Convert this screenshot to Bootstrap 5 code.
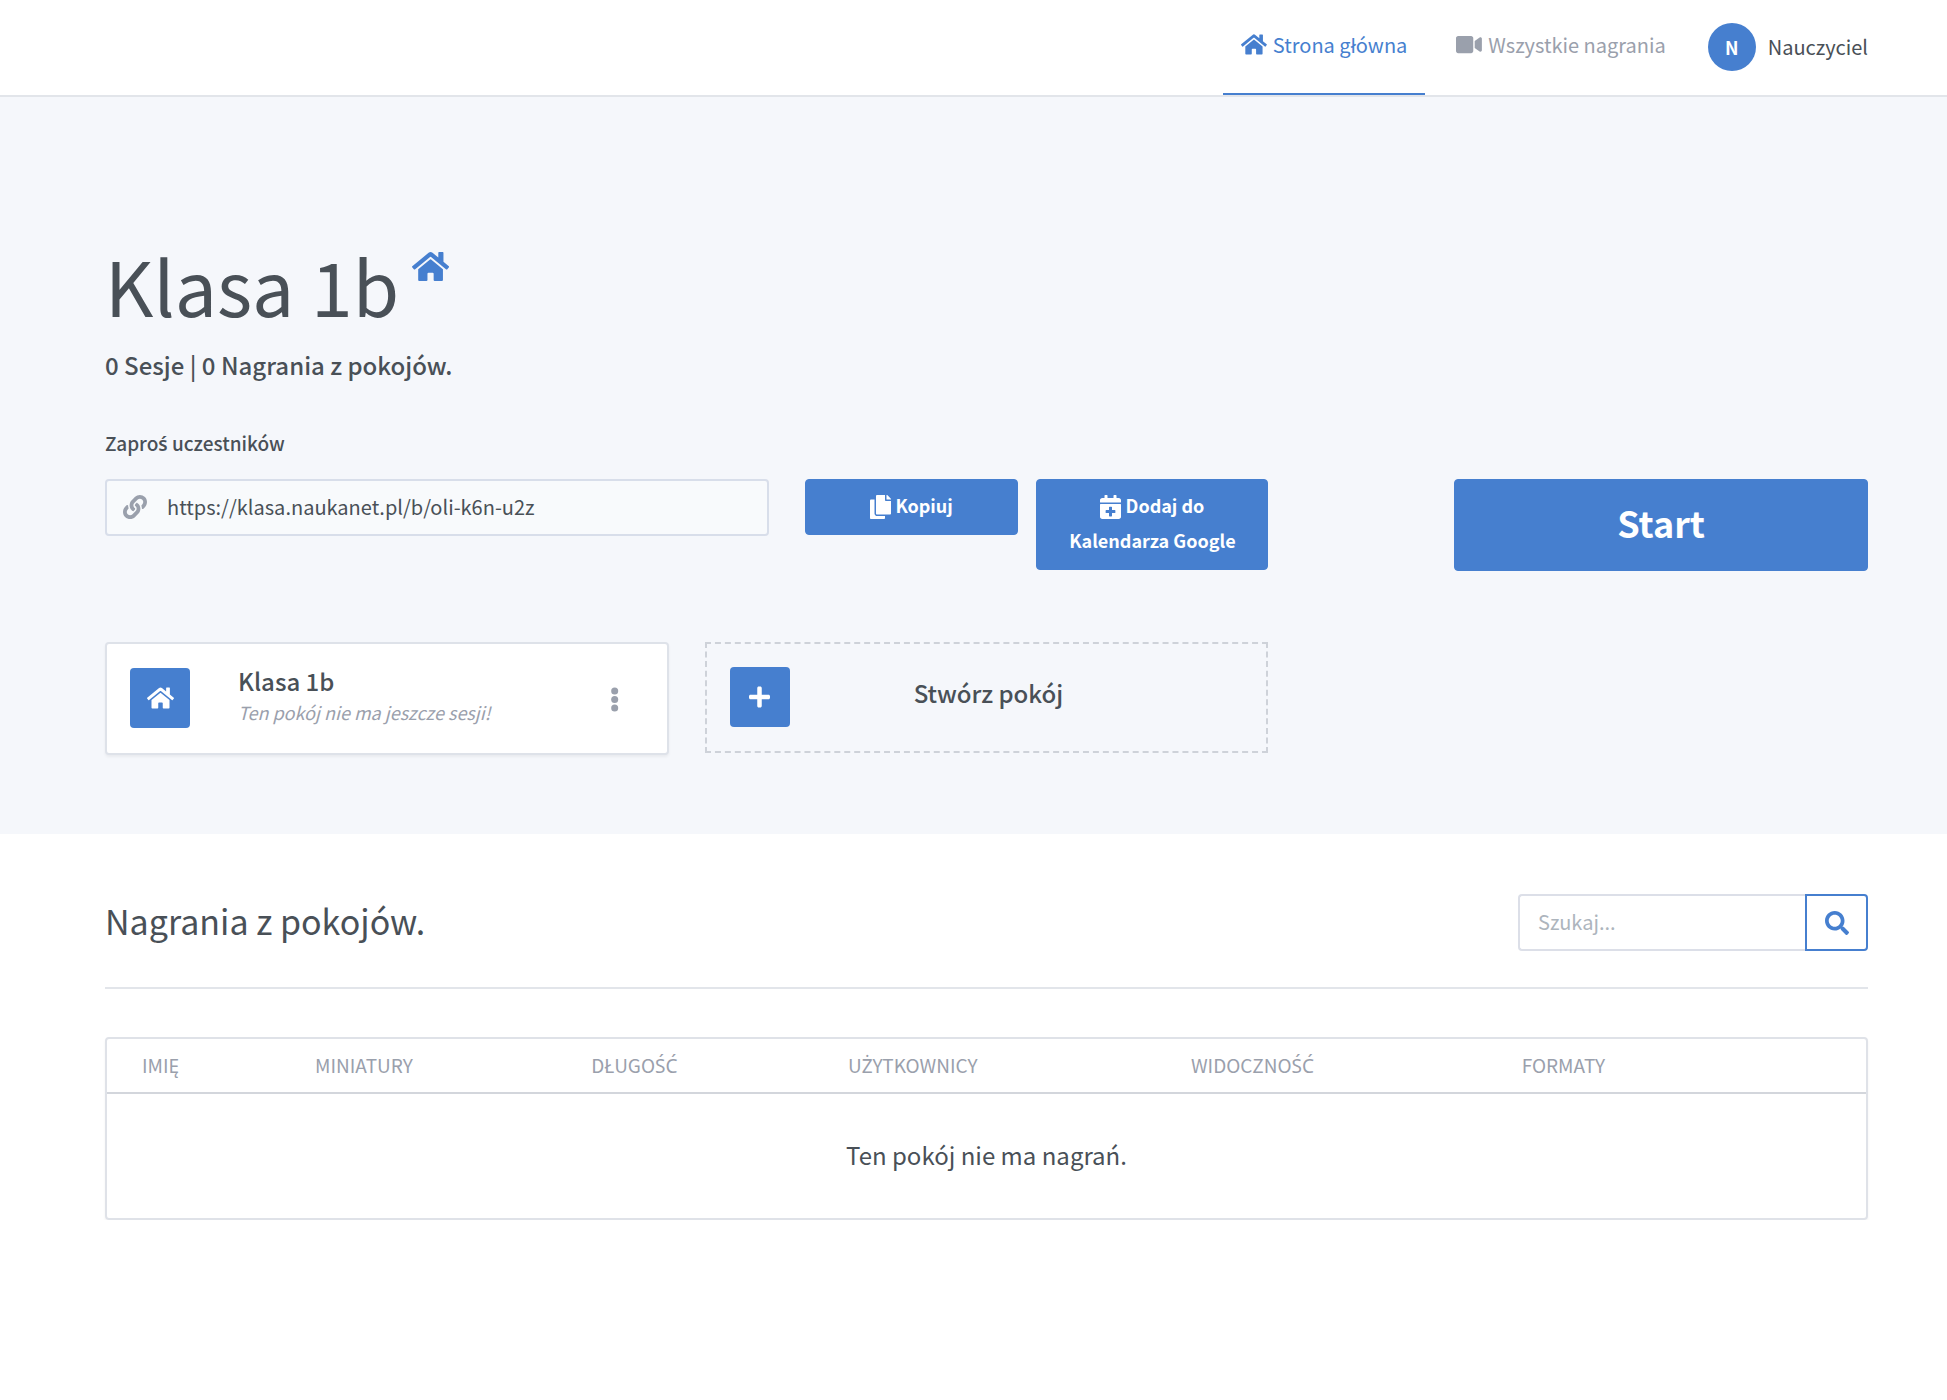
<!DOCTYPE html>
<html lang="pl">
<head>
<meta charset="utf-8">
<meta name="viewport" content="width=device-width, initial-scale=1">
<title>Klasa 1b</title>
<link href="https://cdn.jsdelivr.net/npm/bootstrap@5.3.0/dist/css/bootstrap.min.css" rel="stylesheet">
<style>
  :root { --brand: #467fcf; --ink: #495057; --soft: #9aa0ac; --line: #dee2e9; --tint: #f5f7fb; }
  body { font-family: "Noto Sans CJK SC", "Noto Sans", sans-serif; font-size: 20px; line-height: 36px; color: var(--ink); background: #fff; }
  /* the main family has no ś, Ś, Ć or Ż */
  .pl { font-family: "Noto Sans", "Open Sans", sans-serif; line-height: 1; }
  .page-wrap { padding-left: 105px; padding-right: 79px; }
  .row { --bs-gutter-x: 36px; }
  .ico { height: 1em; width: auto; fill: currentColor; flex: none; }
  .top-bar { height: 97px; border-bottom: 2px solid #e2e5ea; background: #fff; }
  .top-nav { gap: 13px; }
  .top-link { display: flex; gap: 6px; height: 95px; padding: 27px 18px 0; color: var(--soft); text-decoration: none; border-bottom: 2px solid transparent; }
  .top-link .ico { font-size: 23px; margin-top: 6px; }
  .top-link.active { color: var(--brand); border-color: var(--brand); }
  .user-link { color: var(--ink); text-decoration: none; margin-left: 24px; padding-bottom: 2px; }
  .avatar { width: 48px; height: 48px; border-radius: 50%; background: var(--brand); color: #fff; font-weight: 700; font-size: 18px; }
  .hero { background: var(--tint); padding-top: 141px; padding-bottom: 79px; }
  .room-title { font-size: 75px; line-height: 94px; font-weight: 400; }
  .title-ico { font-size: 33px; color: var(--brand); margin: 12px 0 0 13px; }
  .room-stats { font-size: 24px; line-height: 36px; font-weight: 500; margin: 15px 0 42px; }
  .invite-label { font-size: 19px; line-height: 36px; font-weight: 500; margin-bottom: 18px; }
  .invite-label .pl { font-weight: 600; }
  .link-box { position: relative; }
  .link-box .ico { position: absolute; left: 18px; top: 16px; font-size: 24px; color: var(--soft); }
  .field { height: 57px; font-size: 20px; line-height: 36px; color: var(--ink); border: 2px solid #d8deea; border-radius: 4px; padding: 0 18px 2px; background: #fff; }
  .link-box .field { background: #f8fafc; padding-left: 60px; }
  .field::placeholder { color: #adb5bd; }
  .actions { display: grid; grid-template-columns: 214fr 232fr; gap: 18px; align-items: start; }
  .btn-brand { --bs-btn-bg: var(--brand); --bs-btn-border-color: var(--brand); --bs-btn-color: #fff; --bs-btn-hover-bg: #316cbe; --bs-btn-hover-color: #fff; --bs-btn-border-radius: 4px; font-size: 18px; line-height: 35px; font-weight: 700; padding: 8px 24px 11px; }
  .btn-brand .ico { font-size: 24px; vertical-align: -6px; }
  .btn-start { font-size: 36px; line-height: 36px; padding: 24px 24px 30px; }
  .rooms { margin-top: 71px; }
  .room-card { border: 2px solid var(--line); border-radius: 4px; background: #fff; height: 113px; padding: 0 23px 2px; box-shadow: 0 2px 3px rgba(0,0,0,.05); }
  .room-new { width: 100%; border: 2px dashed #ced2d9; background: none; height: 111px; padding: 0 23px 2px; color: var(--ink); }
  .tile { width: 60px; height: 60px; border-radius: 4px; background: var(--brand); color: #fff; font-size: 24px; flex: none; }
  .room-name { font-size: 24px; line-height: 32px; font-weight: 500; margin: 0; }
  .room-new .room-name { padding: 0 56px 7px 0; }
  .room-note { font-size: 18px; line-height: 30px; font-style: italic; color: var(--soft); margin: 0; }
  .dots { border: 0; background: none; color: var(--soft); font-size: 25px; line-height: 1; padding: 0; margin-right: 24px; }
  .list-head { padding: 60px 0 36px; border-bottom: 2px solid #e2e5ea; }
  .list-title { font-size: 34px; line-height: 54px; font-weight: 400; margin: 0; padding-bottom: 3px; }
  .search-box { width: 350px; }
  .search-box .field { flex: 1; min-width: 0; border-right: 0; border-radius: 4px 0 0 4px; border-color: #dcdfe8; }
  .search-btn { width: 63px; border: 2px solid var(--brand); border-radius: 0 4px 4px 0; background: #fff; color: var(--brand); font-size: 24px; }
  .rec-box { border: 2px solid #dfe2e8; border-radius: 4px; margin-top: 48px; box-shadow: 0 2px 3px rgba(0,0,0,.05); }
  .rec-table { width: 100%; table-layout: fixed; }
  .rec-table th { font-size: 19px; line-height: 36px; font-weight: 400; color: var(--soft); padding: 8px 18px 9px; border-bottom: 2px solid #d3d6dc; }
  .rec-table th:first-child { padding-left: 35px; }
  .rec-table td { font-size: 24px; line-height: 36px; padding: 43px 18px 45px; text-align: center; }
</style>
</head>
<body>
<svg class="d-none" xmlns="http://www.w3.org/2000/svg">
  <symbol id="home" viewBox="0 0 576 512"><path d="M280.37 148.26L96 300.11V464a16 16 0 0 0 16 16l112.06-.29a16 16 0 0 0 15.92-16V368a16 16 0 0 1 16-16h64a16 16 0 0 1 16 16v95.64a16 16 0 0 0 16 16.05L464 480a16 16 0 0 0 16-16V300L295.67 148.26a12.19 12.19 0 0 0-15.3 0zM571.6 251.47L488 182.56V44.05a12 12 0 0 0-12-12h-56a12 12 0 0 0-12 12v72.61L318.47 43a48 48 0 0 0-61 0L4.34 251.47a12 12 0 0 0-1.6 16.9l25.5 31A12 12 0 0 0 45.15 301l235.22-193.74a12.19 12.19 0 0 1 15.3 0L530.9 301a12 12 0 0 0 16.9-1.6l25.5-31a12 12 0 0 0-1.7-16.93z"/></symbol>
</svg>
<header class="top-bar page-wrap d-flex justify-content-end">
  <nav class="top-nav d-flex" aria-label="Menu">
    <a class="top-link active" href="#" aria-current="page"><svg class="ico" viewBox="0 0 576 512"><use href="#home"/></svg>Strona główna</a>
    <a class="top-link" href="#"><svg class="ico" viewBox="0 0 576 512"><path d="M336.2 64H47.8C21.4 64 0 85.4 0 111.8v288.4C0 426.6 21.4 448 47.8 448h288.4c26.4 0 47.8-21.4 47.8-47.8V111.8c0-26.4-21.4-47.8-47.8-47.8zm189.4 37.7L416 177.3v157.4l109.6 75.5c21.2 14.6 50.4-.3 50.4-25.8V127.5c0-25.4-29.1-40.4-50.4-25.8z"/></svg>Wszystkie nagrania</a>
  </nav>
  <a class="user-link d-flex align-items-center" href="#"><span class="avatar d-flex align-items-center justify-content-center me-2">N</span><span class="ms-1">Nauczyciel</span></a>
</header>
<main>
  <section class="hero page-wrap">
    <div class="d-flex align-items-start">
      <h1 class="room-title m-0">Klasa 1b</h1>
      <svg class="ico title-ico" viewBox="0 0 576 512"><use href="#home"/></svg>
    </div>
    <p class="room-stats">0 Sesje | 0 Nagrania z pokojów.</p>
    <label class="invite-label d-block" for="invite">Zapro<span class="pl">ś</span> uczestników</label>
    <div class="row">
      <div class="col-8">
        <div class="row">
          <div class="col-7">
            <div class="link-box">
              <svg class="ico" viewBox="0 0 512 512"><path d="M326.612 185.391c59.747 59.809 58.927 155.698.36 214.59-.11.12-.24.25-.36.37l-67.2 67.2c-59.27 59.27-155.699 59.262-214.96 0-59.27-59.26-59.27-155.7 0-214.96l37.106-37.106c9.84-9.84 26.786-3.3 27.294 10.606.648 17.722 3.826 35.527 9.69 52.721 1.986 5.822.567 12.262-3.783 16.612l-13.087 13.087c-28.026 28.026-28.905 73.66-1.155 101.96 28.024 28.579 74.086 28.749 102.325.51l67.2-67.19c28.191-28.191 28.073-73.757 0-101.83-3.701-3.694-7.429-6.564-10.341-8.569a16.037 16.037 0 0 1-6.947-12.606c-.396-10.567 3.348-21.456 11.698-29.806l21.054-21.055c5.521-5.521 14.182-6.199 20.584-1.731a152.482 152.482 0 0 1 20.522 17.197zM467.547 44.449c-59.261-59.262-155.69-59.27-214.96 0l-67.2 67.2c-.12.12-.25.25-.36.37-58.566 58.892-59.387 154.781.36 214.59a152.454 152.454 0 0 0 20.521 17.196c6.402 4.468 15.064 3.789 20.584-1.731l21.054-21.055c8.35-8.35 12.094-19.239 11.698-29.806a16.037 16.037 0 0 0-6.947-12.606c-2.912-2.005-6.64-4.875-10.341-8.569-28.073-28.073-28.191-73.639 0-101.83l67.2-67.19c28.239-28.239 74.3-28.069 102.325.51 27.75 28.3 26.872 73.934-1.155 101.96l-13.087 13.087c-4.35 4.35-5.769 10.79-3.783 16.612 5.864 17.194 9.042 34.999 9.69 52.721.509 13.906 17.454 20.446 27.294 10.606l37.106-37.106c59.271-59.259 59.271-155.699.001-214.959z"/></svg>
              <input id="invite" class="field w-100" type="text" readonly value="https://klasa.naukanet.pl/b/oli-k6n-u2z">
            </div>
          </div>
          <div class="col-5 actions">
            <button class="btn btn-brand" type="button"><svg class="ico" viewBox="0 0 448 512"><path d="M320 448v40c0 13.255-10.745 24-24 24H24c-13.255 0-24-10.745-24-24V120c0-13.255 10.745-24 24-24h72v296c0 30.879 25.121 56 56 56h168zm0-344V0H152c-13.255 0-24 10.745-24 24v368c0 13.255 10.745 24 24 24h272c13.255 0 24-10.745 24-24V128H344c-13.2 0-24-10.8-24-24zm120.971-31.029L375.029 7.029A24 24 0 0 0 358.059 0H352v96h96v-6.059a24 24 0 0 0-7.029-16.97z"/></svg> Kopiuj</button>
            <button class="btn btn-brand" type="button"><svg class="ico" viewBox="0 0 448 512"><path d="M436 160H12c-6.600 0-12-5.400-12-12v-36c0-26.500 21.500-48 48-48h48V12c0-6.600 5.400-12 12-12h40c6.600 0 12 5.400 12 12v52h128V12c0-6.600 5.400-12 12-12h40c6.600 0 12 5.400 12 12v52h48c26.500 0 48 21.500 48 48v36c0 6.600-5.400 12-12 12zM12 192h424c6.600 0 12 5.400 12 12v260c0 26.500-21.500 48-48 48H48c-26.500 0-48-21.500-48-48V204c0-6.600 5.400-12 12-12zm316 140c0-6.600-5.400-12-12-12h-60v-60c0-6.600-5.400-12-12-12h-40c-6.600 0-12 5.400-12 12v60h-60c-6.600 0-12 5.400-12 12v40c0 6.600 5.400 12 12 12h60v60c0 6.600 5.400 12 12 12h40c6.600 0 12-5.400 12-12v-60h60c6.600 0 12-5.400 12-12v-40z"/></svg> Dodaj do Kalendarza Google</button>
          </div>
        </div>
      </div>
      <div class="col-3 offset-1">
        <button class="btn btn-brand btn-start w-100" type="button">Start</button>
      </div>
    </div>
    <div class="row rooms">
      <div class="col-4">
        <div class="room-card d-flex align-items-center">
          <span class="tile d-flex align-items-center justify-content-center"><svg class="ico" viewBox="0 0 576 512"><use href="#home"/></svg></span>
          <div class="flex-grow-1 ms-5 pb-1">
            <h2 class="room-name">Klasa 1b</h2>
            <p class="room-note">Ten pokój nie ma jeszcze sesji!</p>
          </div>
          <button class="dots" type="button" aria-label="Opcje"><svg class="ico" viewBox="0 0 192 512"><circle cx="96" cy="80" r="72"/><circle cx="96" cy="256" r="72"/><circle cx="96" cy="432" r="72"/></svg></button>
        </div>
      </div>
      <div class="col-4">
        <button class="room-new d-flex align-items-center" type="button">
          <span class="tile d-flex align-items-center justify-content-center"><svg class="ico" viewBox="0 0 448 512"><path d="M416 208H272V64c0-17.670-14.330-32-32-32h-32c-17.670 0-32 14.330-32 32v144H32c-17.670 0-32 14.330-32 32v32c0 17.670 14.330 32 32 32h144v144c0 17.670 14.330 32 32 32h32c17.670 0 32-14.330 32-32V304h144c17.670 0 32-14.330 32-32v-32c0-17.670-14.330-32-32-32z"/></svg></span>
          <span class="room-name flex-grow-1">Stwórz pokój</span>
        </button>
      </div>
    </div>
  </section>
  <section class="page-wrap">
    <div class="list-head d-flex justify-content-between align-items-center">
      <h2 class="list-title">Nagrania z pokojów.</h2>
      <form class="search-box d-flex" role="search">
        <input class="field" type="search" placeholder="Szukaj..." aria-label="Szukaj">
        <button class="search-btn d-flex align-items-center justify-content-center" type="button" aria-label="Szukaj"><svg class="ico" viewBox="0 0 512 512"><path d="M505 442.700L405.300 343c-4.500-4.500-10.600-7-17-7H372c27.600-35.300 44-79.700 44-128C416 93.100 322.900 0 208 0S0 93.100 0 208s93.100 208 208 208c48.300 0 92.700-16.400 128-44v16.300c0 6.400 2.500 12.500 7 17l99.700 99.700c9.400 9.400 24.600 9.400 33.900 0l28.300-28.300c9.400-9.400 9.400-24.600.1-34zM208 336c-70.700 0-128-57.200-128-128 0-70.700 57.200-128 128-128 70.700 0 128 57.200 128 128 0 70.700-57.200 128-128 128z"/></svg></button>
      </form>
    </div>
    <div class="rec-box">
      <table class="rec-table">
        <colgroup><col style="width:10.8%"><col style="width:15.7%"><col style="width:14.6%"><col style="width:19.5%"><col style="width:18.8%"><col></colgroup>
        <thead><tr><th scope="col">IMIĘ</th><th scope="col">MINIATURY</th><th scope="col">DŁUGO<span class="pl">ŚĆ</span></th><th scope="col">U<span class="pl">Ż</span>YTKOWNICY</th><th scope="col">WIDOCZNO<span class="pl">ŚĆ</span></th><th scope="col">FORMATY</th></tr></thead>
        <tbody><tr><td colspan="6">Ten pokój nie ma nagrań.</td></tr></tbody>
      </table>
    </div>
  </section>
</main>
<script src="https://cdn.jsdelivr.net/npm/bootstrap@5.3.0/dist/js/bootstrap.bundle.min.js"></script>
</body>
</html>
